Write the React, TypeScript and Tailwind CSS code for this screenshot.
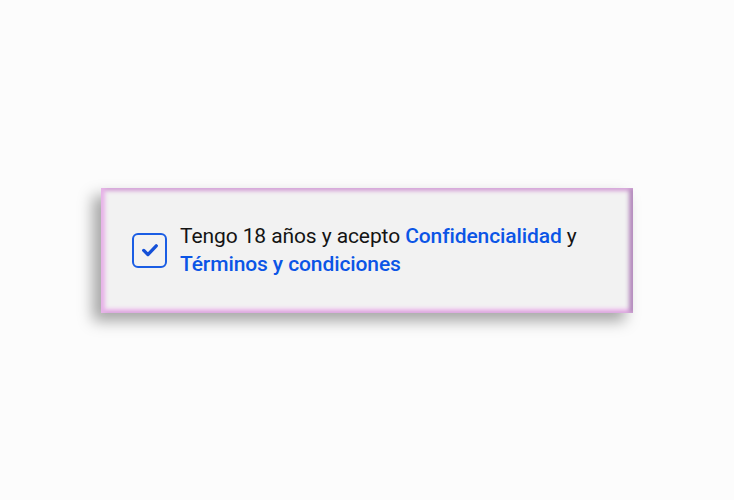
export default function App() {
  return (
    <div className="w-[734px] h-[500px] bg-[#fcfcfc] flex items-center justify-center font-['Roboto',sans-serif]">
      <label className="w-[532px] h-[125px] flex items-center gap-[13px] pl-[31px] pr-6 bg-[#f2f2f2] shadow-[inset_4px_0_4px_#e7b4e8,inset_-4px_0_4px_#b48cbd,inset_0_3px_4px_#dcb0dc,inset_0_-4px_4px_#eeb8ee,-8px_8px_14px_rgba(0,0,0,0.35)] cursor-pointer">
        <span className="shrink-0 w-[35px] h-[35px] rounded-[6px] border-2 border-[#1a5de4] flex items-center justify-center">
          <svg width="20" height="20" viewBox="0 0 24 24" fill="none">
            <path d="M4.5 12.5l5 5L19.5 7" stroke="#1450d8" strokeWidth="4" strokeLinecap="round" strokeLinejoin="round" />
          </svg>
        </span>
        <p className="text-[21px] leading-[28px] text-[#141414] tracking-[-0.1px]">
          Tengo 18 años y acepto{' '}
          <a className="text-[#0b55e6] font-medium">Confidencialidad</a> y{' '}
          <a className="text-[#0b55e6] font-medium">Términos y condiciones</a>
        </p>
      </label>
    </div>
  );
}
